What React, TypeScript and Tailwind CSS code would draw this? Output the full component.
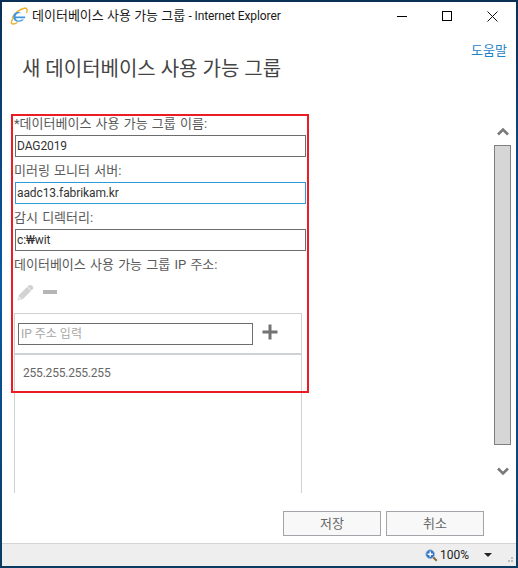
import React from "react";

const font = { fontFamily: 'Roboto,"Noto Sans CJK KR",sans-serif' };

function Field({ label, value, focus }: { label: string; value: string; focus?: boolean }) {
  return (
    <div className="flex flex-col">
      <div className="h-[24px] text-[13px] leading-[26px] text-[#5a5a5a] whitespace-nowrap [word-spacing:1px]">{label}</div>
      <div className={`ml-[1px] h-[22px] w-[291px] border px-[1px] text-[12px] leading-[20px] tracking-[-0.1px] text-[#333] ${focus ? "border-[#2e9bd6]" : "border-[#6d6d6d]"}`}>{value}</div>
    </div>
  );
}

export default function App() {
  return (
    <div style={font} className="flex h-[568px] w-[518px] flex-col overflow-hidden bg-linear-to-b from-[#0a2f55] via-[#0a5aa5] to-[#0a3a60] p-[2px]">
      <div className="relative flex min-h-0 flex-1 flex-col bg-white">
        <div className="flex h-[28px] shrink-0 items-center pl-[8px]">
          <svg width="18" height="18" viewBox="0 0 18 18" className="shrink-0">
            <path d="M2 11C5 6 10 2 15 1C17.5 1 17.5 3.5 16.5 6" fill="none" stroke="#efae2b" strokeWidth="1.3" />
            <path d="M3.5 11C1 14 0.5 17 3 17C4.5 17 6 16.5 7.5 15.5" fill="none" stroke="#efae2b" strokeWidth="1.3" />
            <path d="M15 9.5H5.5C6 6 11 5 12.5 7.5C11 3.5 3.5 4 3.3 9.5C3 15 10 16.5 14 12.5H11.5C10 14 6.5 14 5.5 11.2H15.3Z" fill="#3d97dd" />
          </svg>
          <span className="ml-[4px] whitespace-nowrap text-[13px] text-[#1a1a1a]">
            데이터베이스 사용 가능 그룹 <span className="text-[12px] tracking-[-0.1px]">- Internet Explorer</span>
          </span>
          <div className="ml-auto flex items-center">
            <div className="mr-[35px] h-[1px] w-[10px] bg-black" />
            <div className="mr-[35px] h-[10px] w-[10px] border border-black" />
            <svg width="11" height="11" viewBox="0 0 11 11" className="mr-[18px]">
              <path d="M0.5 0.5L10.5 10.5M10.5 0.5L0.5 10.5" stroke="#111" strokeWidth="1" />
            </svg>
          </div>
        </div>

        <div className="flex h-[29px] shrink-0 justify-end pr-[9px] pt-[13px] text-[13px] leading-[16px] text-[#1f84c9]">도움말</div>

        <div className="h-[20px] shrink-0 pl-[20px] text-[20px] leading-[20px] text-[#444]">새 데이터베이스 사용 가능 그룹</div>

        <div className="relative flex min-h-0 flex-1 flex-col pt-[32px]">
          <div className="flex min-h-0 flex-1">
            <div className="flex w-[492px] flex-col pl-[12px]">
              <Field label="*데이터베이스 사용 가능 그룹 이름:" value="DAG2019" />
              <div className="h-[1px]" />
              <Field label="미러링 모니터 서버:" value="aadc13.fabrikam.kr" focus />
              <div className="h-[1px]" />
              <Field label="감시 디렉터리:" value="c:₩wit" />
              <div className="h-[26px] pt-[2px] text-[13px] leading-[24px] text-[#5a5a5a] [word-spacing:1px]">데이터베이스 사용 가능 그룹 IP 주소:</div>
              <div className="flex h-[36px] items-center gap-[9px] pb-[6px] pl-[3px]">
                <svg width="17" height="17" viewBox="0 0 17 17">
                  <path d="M0.5 16.5L2 11L11.5 1.5C13 0.5 15 1 16 2.5C16.5 3.5 16.5 4.5 15.5 5.5L6 15Z" fill="#d2d2d2" />
                  <path d="M1.2 15.8L2.3 12.3L5 15Z" fill="#ebebeb" />
                  <path d="M10.5 3L14.5 7" stroke="#ffffff" strokeWidth="0.8" />
                </svg>
                <div className="h-[4px] w-[14px] bg-[#b5b5b5]" />
              </div>
              <div className="flex w-[288px] flex-1 flex-col border-x border-[#cfd2d5]">
                <div className="flex h-[42px] shrink-0 items-center border-t border-b-2 border-[#cfd2d5] pl-[3px]">
                  <div className="h-[22px] w-[235px] border border-[#6d6d6d] px-[2px] text-[12px] leading-[20px] text-[#a8a8a8]">IP 주소 입력</div>
                  <svg width="16" height="16" viewBox="0 0 16 16" className="mb-[4px] ml-[9px]">
                    <path d="M8 0.5V15.5M0.5 8H15.5" stroke="#737373" strokeWidth="3" />
                  </svg>
                </div>
                <div className="h-[36px] pl-[8px] text-[12px] leading-[36px] tracking-[-0.2px] text-[#666]">255.255.255.255</div>
              </div>
            </div>
            <div className="flex w-[17px] flex-col items-center pt-[16px]">
              <svg width="12" height="9" viewBox="0 0 12 9" className="mb-[9px] shrink-0">
                <path d="M1 7.5L6 2.5L11 7.5" fill="none" stroke="#7a7a7a" strokeWidth="2.6" />
              </svg>
              <div className="h-[300px] w-[17px] shrink-0 border border-[#7f7f7f] bg-[#d6d6d6]" />
              <svg width="12" height="9" viewBox="0 0 12 9" className="mt-[22px] shrink-0">
                <path d="M1 1.5L6 6.5L11 1.5" fill="none" stroke="#7a7a7a" strokeWidth="2.6" />
              </svg>
            </div>
          </div>

          <div className="flex h-[50px] shrink-0 justify-end gap-[5px] pr-[32px] pt-[18px]">
            <div className="flex h-[25px] w-[98px] items-center justify-center border border-[#a3a3a9] bg-[#f8f8f8] text-[13px] text-[#666]">저장</div>
            <div className="flex h-[25px] w-[98px] items-center justify-center border border-[#a3a3a9] bg-[#f8f8f8] text-[13px] text-[#666]">취소</div>
          </div>

          <div className="flex h-[23px] shrink-0 items-center border-t border-[#d4d4d4] bg-[#eeeeee] pr-[3px]">
            <div className="ml-auto flex items-center">
              <svg width="13" height="13" viewBox="0 0 15 15">
                <path d="M9.5 9.5L13.5 13.5" stroke="#8a6a3a" strokeWidth="2.4" />
                <circle cx="6" cy="6" r="5" fill="#2f74c8" stroke="#9ab4cf" />
                <path d="M6 3V9M3 6H9" stroke="#fff" strokeWidth="1.6" />
              </svg>
              <span className="ml-[2px] text-[12px] text-[#222]">100%</span>
              <svg width="8" height="4" viewBox="0 0 8 4" className="ml-[15px]">
                <path d="M0 0H8L4 4Z" fill="#222" />
              </svg>
              <div className="ml-[13px] mt-[8px] grid grid-cols-3 gap-[1px]">
                <i className="h-[2px] w-[2px]" />
                <i className="h-[2px] w-[2px]" />
                <i className="h-[2px] w-[2px] bg-[#bbb]" />
                <i className="h-[2px] w-[2px]" />
                <i className="h-[2px] w-[2px] bg-[#bbb]" />
                <i className="h-[2px] w-[2px] bg-[#bbb]" />
              </div>
            </div>
          </div>
        </div>

        <div className="pointer-events-none absolute left-[9px] top-[112px] h-[279px] w-[298px] border-2 border-[#ec1c24]" />
      </div>
    </div>
  );
}
